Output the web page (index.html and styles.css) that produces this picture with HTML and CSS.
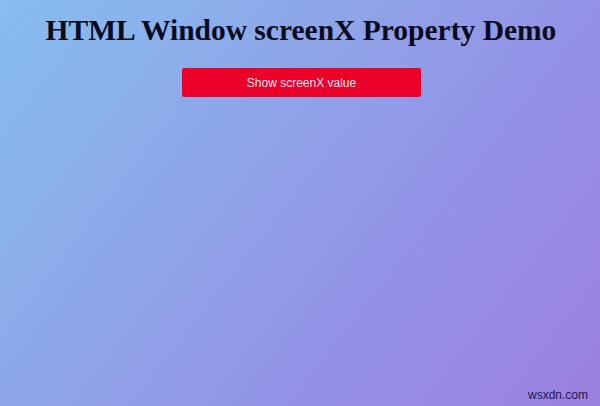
FILE: index.html
```html
<!DOCTYPE html>
<html>
<head>
<meta charset="utf-8">
<link rel="stylesheet" href="styles.css">
</head>
<body>
<div class="page">
  <h1 class="title">HTML Window screenX Property Demo</h1>
  <button class="btn">Show screenX value</button>
  <div class="spacer"></div>
  <div class="footer"><span class="mark">wsxdn.com</span></div>
</div>
</body>
</html>
```
FILE: styles.css
```css
html, body {
  margin: 0;
  padding: 0;
  height: 100%;
}
body {
  background: linear-gradient(128deg, #86bdef 0%, #8fa4e8 40%, #9392e6 65%, #9c80e0 100%);
}
.page {
  height: 406px;
  display: flex;
  flex-direction: column;
  align-items: center;
  box-sizing: border-box;
  padding-top: 13px;
}
.title {
  margin: 0;
  font-family: "Liberation Serif", "Times New Roman", serif;
  font-weight: bold;
  font-size: 29.5px;
  line-height: 34px;
  color: #0b0b1e;
  padding-left: 2px;
}
.btn {
  margin-top: 21px;
  margin-left: 3px;
  width: 239px;
  height: 29px;
  border: none;
  border-radius: 2px;
  background: #ea0029;
  color: #f3e6ee;
  font-family: "Liberation Sans", Arial, sans-serif;
  font-size: 12px;
  padding: 0;
}
.spacer { flex: 1; }
.footer {
  align-self: stretch;
  display: flex;
  justify-content: flex-end;
  padding: 0 12px 4px 0;
}
.mark {
  font-family: "Liberation Sans", Arial, sans-serif;
  font-size: 12px;
  color: #1a1a48;
}
```
